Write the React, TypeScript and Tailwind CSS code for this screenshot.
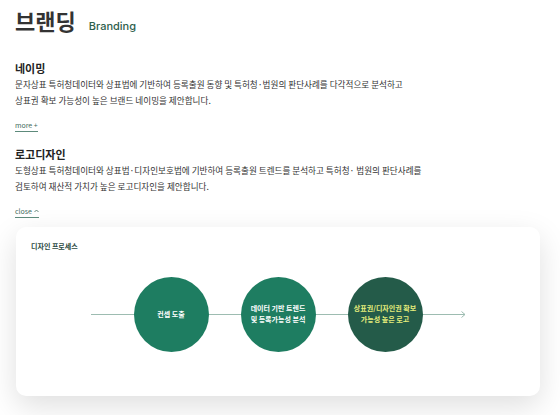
import React from "react";

const font = { fontFamily: "'Noto Sans CJK KR', sans-serif" };

const steps = [
  { lines: ["컨셉 도출"], dark: false },
  { lines: ["데이터 기반 트렌드", "및 등록가능성 분석"], dark: false },
  { lines: ["상표권/디자인권 확보", "가능성 높은 로고"], dark: true },
];

function Section({
  title,
  lines,
  toggle,
}: {
  title: string;
  lines: string[];
  toggle: React.ReactNode;
}) {
  return (
    <div>
      <h3 className="text-[11px] font-bold leading-[16px] text-[#222]">{title}</h3>
      <p className="text-[8.6px] leading-[16.5px] text-[#333]">
        {lines.map((l) => (
          <span key={l} className="block">
            {l}
          </span>
        ))}
      </p>
      <div className="mt-[5px] inline-flex items-center gap-[2px] border-b border-[#5d8a7b] pb-[1px] text-[7px] leading-[10px] text-[#3f6b5c]">
        {toggle}
      </div>
    </div>
  );
}

export default function App() {
  return (
    <div className="w-[560px] h-[415px] overflow-hidden bg-white px-[15px]" style={font}>
      {/* Title */}
      <div className="flex items-baseline gap-[13px] pt-[6px]">
        <h1 className="text-[22px] font-bold leading-[28px] text-[#333]">브랜딩</h1>
        <span
          className="text-[11px] font-medium text-[#2d5e4c]"
          style={{ fontFamily: "Inter, sans-serif" }}
        >
          Branding
        </span>
      </div>

      <div className="mt-[25px]">
        <Section
          title="네이밍"
          lines={[
            "문자상표 특허청데이터와 상표법에 기반하여 등록출원 동향 및 특허청·법원의 판단사례를 다각적으로 분석하고",
            "상표권 확보 가능성이 높은 브랜드 네이밍을 제안합니다.",
          ]}
          toggle={<span>more +</span>}
        />
      </div>

      <div className="mt-[13px]">
        <Section
          title="로고디자인"
          lines={[
            "도형상표 특허청데이터와 상표법·디자인보호법에 기반하여 등록출원 트렌드를 분석하고 특허청· 법원의 판단사례를",
            "검토하여 재산적 가치가 높은 로고디자인을 제안합니다.",
          ]}
          toggle={
            <>
              <span>close</span>
              <svg width="5" height="4" viewBox="0 0 5 4" className="mt-[1px]">
                <path d="M0.5 3 L2.5 1 L4.5 3" fill="none" stroke="#3f6b5c" strokeWidth="0.8" />
              </svg>
            </>
          }
        />
      </div>

      {/* Design process card */}
      <div className="ml-[1px] mt-[8px] h-[169px] w-[524px] rounded-[10px] bg-white shadow-[0_10px_30px_rgba(0,0,0,0.13)]">
        <div className="pl-[15px] pt-[14px] text-[7px] font-bold leading-[10px] text-[#2b4a3f]">
          디자인 프로세스
        </div>
        <div className="relative mt-[26px] h-[75px]">
          <svg className="absolute inset-0" width="524" height="75" viewBox="0 0 524 75">
            <line x1="75" y1="37.5" x2="449" y2="37.5" stroke="#9dbcb1" strokeWidth="1" />
            <path d="M445.5 34.5 L449 37.5 L445.5 40.5" fill="none" stroke="#9dbcb1" strokeWidth="1" />
          </svg>
          <div className="relative flex justify-center gap-[32px]">
            {steps.map((s, i) => (
              <div
                key={i}
                className={
                  "flex h-[75px] w-[75px] flex-col items-center justify-center rounded-full text-[7px] font-bold leading-[11px] " +
                  (s.dark ? "bg-[#245b49] text-[#e6ee7c]" : "bg-[#1e7d61] text-white")
                }
              >
                {s.lines.map((l) => (
                  <span key={l}>{l}</span>
                ))}
              </div>
            ))}
          </div>
        </div>
      </div>
    </div>
  );
}
